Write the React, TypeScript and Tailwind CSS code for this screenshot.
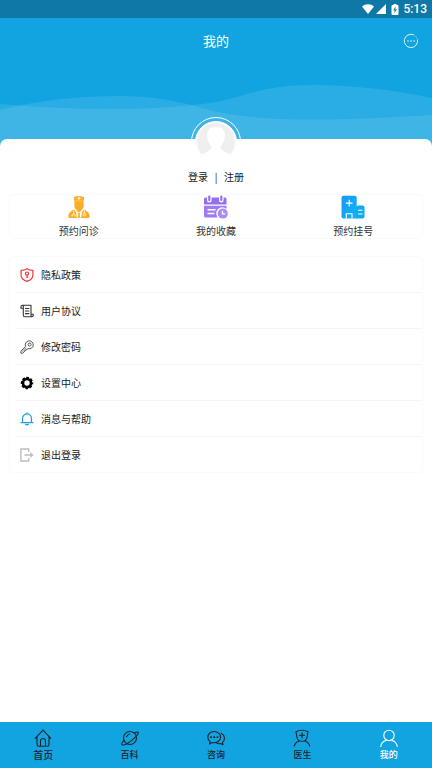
import type { ReactNode } from "react";

function StatusBar() {
  return (
    <div className="flex h-[18px] items-center justify-end bg-[#0f78a7] pr-[5px] text-white">
      <svg viewBox="0 0 12 10" className="h-[10px] w-[12px]" fill="currentColor" aria-hidden="true">
        <path d="M6 10 0 2.400C3.200-.5 8.800-.5 12 2.400Z" />
      </svg>
      <svg viewBox="0 0 10 10" className="ml-[2px] h-[10px] w-[10px]" fill="currentColor" aria-hidden="true">
        <path d="M10 0V10H0Z" />
      </svg>
      <svg viewBox="0 0 8 11" className="ml-[5px] h-[11px] w-[8px]" aria-hidden="true">
        <path d="M2.500 0h3v1H6.500Q7.500 1 7.500 2V10Q7.500 11 6.500 11h-5Q.5 11 .5 10V2Q.5 1 1.500 1h1Z" fill="#fff" />
        <path d="M4.700 2.500 2.200 6.300H3.700L3.300 9.200 5.900 5.400H4.300Z" fill="#0f78a7" />
      </svg>
      <span className="ml-[4px] font-[Roboto,sans-serif] text-[12px] leading-[18px] font-medium">5:13</span>
    </div>
  );
}

function Waves() {
  return (
    <svg
      viewBox="0 0 432 132"
      preserveAspectRatio="none"
      className="absolute inset-0 h-full w-full"
      fill="#fff"
      fillOpacity="0.1"
      aria-hidden="true"
    >
      <path d="M0 92C40 82 80 78 120 78C150 78 172 82 195 88C225 97 255 101.500 315 101.500C360 101.500 400 99 432 97V132H0Z" />
      <path d="M0 86C35 89 75 91 115 91C155 91 190 88 216 84C245 79 260 67 315 67C350 67 395 72 432 80V132H0Z" />
    </svg>
  );
}

function Header() {
  return (
    <header className="relative h-[132px] bg-[#12a4e1]">
      <Waves />
      <div className="relative grid h-[46px] grid-cols-[1fr_auto_1fr] items-center px-[13px]">
        <h1 className="col-start-2 text-[13px] leading-[18px] text-white">我的</h1>
        <button type="button" aria-label="消息" className="justify-self-end">
          <svg viewBox="0 0 16 16" className="h-4 w-4" fill="none" stroke="#fff" strokeOpacity="0.85" strokeWidth="1" strokeLinecap="round">
            <path d="M10.500 1.700A6.700 6.700 0 1 0 14.600 7" />
            <path d="M11.500 2.300A6.700 6.700 0 0 1 14.400 6" strokeOpacity="0.3" />
            <path d="M4.900 8h.1M8 8h.1M11.100 8h.1" strokeWidth="1.500" />
          </svg>
        </button>
      </div>
    </header>
  );
}

function Avatar() {
  return (
    <div className="mx-auto -mt-[22px] flex h-[50px] w-[50px] items-center justify-center rounded-full border border-white">
      <svg viewBox="0 0 42 42" className="h-[42px] w-[42px]" aria-hidden="true">
        <circle cx="21" cy="21" r="20.500" fill="#fff" stroke="#fbfbfb" />
        <circle cx="21" cy="21" r="19" fill="#efefef" />
        <path
          d="M21 5.500C14.500 5.500 11.300 10.500 12.100 16C12.500 20 14.800 23.500 16.300 25C17 29 14 29.800 4.500 34.500A20 20 0 0 0 37.500 34.500C28 29.800 25 29 25.700 25C27.200 23.500 29.500 20 29.900 16C30.700 10.500 27.500 5.500 21 5.500Z"
          fill="#fff"
        />
      </svg>
    </div>
  );
}

const shortcuts: { label: string; icon: ReactNode }[] = [
  {
    label: "预约问诊",
    icon: (
      <svg viewBox="0 0 24 24" className="h-6 w-6" aria-hidden="true">
        <path d="M6.800 2.200Q12-.4 17.200 2.200L16.600 7.500V11.500C16.200 13.500 14.500 15 14.500 15V17H9.500V15S7.800 13.500 7.400 11.500V7.500Z" fill="#fbad26" />
        <path d="M7.300 6.300Q12 5.100 16.700 6.300" stroke="#ffd389" strokeWidth=".7" fill="none" />
        <path d="M12 1.800v3M10.500 3.300h3" stroke="#fff" strokeWidth=".9" />
        <path d="M7.400 14.500 12 22 16.600 14.500C20.500 15.800 22.600 18 22.700 22Q22.700 23 21.500 23H2.500Q1.300 23 1.300 22C1.400 18 3.500 15.800 7.400 14.500Z" fill="#fbad26" />
        <path d="M8.800 15 9.800 22.500H14.200L15.200 15 12 17.800Z" fill="#fff" />
        <path d="m12 17.300-1.300 1.200.7 1-.6 2.300L12 23l1.200-1.200-.6-2.300.7-1Z" fill="#fbad26" />
        <path d="M6.700 15.500v3.500M5.200 21.500V20Q6.700 17.500 8.200 20v1.500M17.300 15.500v3" stroke="#fff" strokeWidth=".9" fill="none" />
        <circle cx="17.300" cy="19.700" r="1.200" fill="none" stroke="#fff" strokeWidth=".9" />
      </svg>
    ),
  },
  {
    label: "我的收藏",
    icon: (
      <svg viewBox="0 0 24 24" className="h-6 w-6" aria-hidden="true">
        <path d="M0 4Q0 2.500 1.500 2.500H3V5Q3 7.500 5.300 7.500T7.600 5V2.500H15V5Q15 7.500 17.300 7.500T19.600 5V2.500H21Q22.500 2.500 22.500 4V9.500H0Z" fill="#9570ec" />
        <rect x="4.200" y=".5" width="2.200" height="5.700" rx="1.100" fill="#9570ec" />
        <rect x="16.200" y=".5" width="2.200" height="5.700" rx="1.100" fill="#9570ec" />
        <path d="M0 10.800H22.500V14A6 6 0 0 0 14 22.500H1.500Q0 22.500 0 21Z" fill="#a17cf1" />
        <path d="M3.500 14.700H11.500M3.500 18.500H10.500" stroke="#fff" strokeWidth="1.400" />
        <circle cx="18.800" cy="18.600" r="5" fill="#a98bf5" />
        <path d="M18.500 15.800V18.900H21.200" stroke="#fff" strokeWidth="1.300" fill="none" />
      </svg>
    ),
  },
  {
    label: "预约挂号",
    icon: (
      <svg viewBox="0 0 24 24" className="h-6 w-6" aria-hidden="true">
        <defs>
          <linearGradient id="hospital" x1="0" y1="0" x2="1" y2="1">
            <stop offset="0" stopColor="#1799f4" />
            <stop offset="1" stopColor="#0bb5fb" />
          </linearGradient>
        </defs>
        <path d="M2.500.8H13.700Q15.700.8 15.700 2.800V23.500H2.500Q.5 23.500.5 21.500V2.800Q.5.8 2.500.8Z" fill="url(#hospital)" />
        <path d="M17 10.500H21.500Q23.500 10.500 23.500 12.500V21.500Q23.500 23.500 21.500 23.500H15V12.500Q15 10.500 17 10.500Z" fill="#0eabf3" />
        <path d="M8.200 4.700V11.500M4.800 8.100H11.600M17 15.300H21.500M17 19H21.500" stroke="#fff" strokeWidth="1.100" />
        <path d="M5.300 23.500V18.800H11V23.500" stroke="#fff" strokeWidth="1.100" fill="none" />
      </svg>
    ),
  },
];

const menu: { label: string; icon: ReactNode }[] = [
  {
    label: "隐私政策",
    icon: (
      <g fill="none" stroke="#f0353c" strokeWidth="1.200" strokeLinejoin="round">
        <path d="M7 .7C5.200 2 3.500 2.400 1.100 2.400V7.200C1.100 10.500 3.500 12.200 7 13.400C10.500 12.200 12.900 10.500 12.900 7.200V2.400C10.500 2.400 8.800 2 7 .7Z" />
        <circle cx="7" cy="5.600" r="1.600" />
        <path d="M7 7.200V10M7 9.200H8.200" />
      </g>
    ),
  },
  {
    label: "用户协议",
    icon: (
      <g fill="none" stroke="#333" strokeWidth="1.100" strokeLinejoin="round">
        <path d="M3.300 4V11.200Q3.300 12.800 5 12.800H11.700Q13.200 12.800 13.200 11.200V10.200H11V1.300H2.400Q1 1.300 1 2.700V4.200H3.300M3.300 4V2.500Q3.300 1.300 2.400 1.300M11 10.200V11.500Q11 12.800 11.800 12.800" />
        <path d="M5 4.500H9.300M5 7H9.300M5 9.600H9.300" />
      </g>
    ),
  },
  {
    label: "修改密码",
    icon: (
      <g fill="none" stroke="#555" strokeWidth="1" strokeLinejoin="round">
        <path d="M5.600 6.500A4 4 0 1 1 8.200 8.700L7 9.300 6.200 9.200 5.800 10.600 4.500 10.700 4.200 12 2.800 13.200H.9V11.200Z" />
        <circle cx="9.600" cy="4.600" r="1.500" />
        <path d="M2 11.600 6.200 7.600" strokeWidth=".7" />
      </g>
    ),
  },
  {
    label: "设置中心",
    icon: (
      <g fill="none" stroke="#000">
        <circle cx="7" cy="7" r="4" strokeWidth="2.600" />
        <circle cx="7" cy="7" r="5.300" strokeWidth="1.800" strokeDasharray="2.700 1.463" strokeDashoffset="1.350" />
      </g>
    ),
  },
  {
    label: "消息与帮助",
    icon: (
      <g fill="none" stroke="#1c9fdc" strokeWidth="1.200" strokeLinecap="round" strokeLinejoin="round">
        <path d="M1 10.700H13M2.600 10.500V6.200A4.400 4.400 0 0 1 11.400 6.200V10.500M7 1.600V.9M5.500 12.300Q7 13.600 8.500 12.300" />
      </g>
    ),
  },
  {
    label: "退出登录",
    icon: (
      <g fill="none" stroke="#bdbdbd" strokeWidth="1.400">
        <path d="M8.700 4V1H.9V13H8.700V10M4.500 7H11.500" />
        <path d="M10.300 4V10L13.600 7Z" fill="#bdbdbd" stroke="none" />
      </g>
    ),
  },
];

const tabs: { label: string; icon: ReactNode }[] = [
  {
    label: "首页",
    icon: <path d="M1.200 9.300 9 1.200 16.800 9.300M3 7.800V15.500Q3 17.200 4.700 17.200H13.300Q15 17.200 15 15.500V7.800M6.500 17V12A2.500 2.500 0 0 1 11.500 12V17" />,
  },
  {
    label: "百科",
    icon: (
      <>
        <circle cx="9" cy="9" r="6.500" />
        <path d="M3 11C1 13.300.3 14.900 1 15.600C2.300 16.800 7 14.400 11.300 10.800C15.500 7.300 18 4.200 17.100 3.200C16.500 2.600 15.200 3 13.500 4M5.500 7.800Q6.500 5.500 8.700 5" />
      </>
    ),
  },
  {
    label: "咨询",
    icon: (
      <>
        <path d="M7.200 2.500C3.500 2.500.8 5 .8 8.200C.8 10 1.600 11.500 3 12.500L2.500 15 5.200 13.600C10 14.500 13.600 11.700 13.600 8.200C13.600 5 10.800 2.500 7.200 2.500Z" />
        <path d="M14.200 4.200C18.200 6.300 18.300 11.200 15.500 13.400L16 15.800 13.500 14.500Q11.500 15 9.800 14.300" />
        <path d="M4 8.200h.2M7.200 8.200h.2M10.400 8.200h.2" strokeWidth="1.800" />
      </>
    ),
  },
  {
    label: "医生",
    icon: (
      <>
        <path d="M3 2.700Q9-.2 15 2.700L14 8.500C13.500 11 11.500 12.300 9 12.300S4.500 11 4 8.500Z" />
        <path d="M9 3.700V8.700M6.500 6.200H11.500M1.300 17.200C1.800 14.800 3.500 13 6 12M16.700 17.200C16.200 14.800 14.500 13 12 12" />
      </>
    ),
  },
  {
    label: "我的",
    icon: (
      <>
        <circle cx="9" cy="6.400" r="5.200" />
        <path d="M.8 17.500C1 14.300 3.300 12.200 6.300 11.200M17.200 17.500C17 14.300 14.700 12.200 11.700 11.200" />
      </>
    ),
  },
];

function TabBar() {
  return (
    <nav className="grid h-[46px] grid-cols-5 bg-[#12a4e1]">
      {tabs.map((tab, i) => (
        <button
          key={tab.label}
          type="button"
          className={`flex flex-col items-center pt-[7px] ${i === 4 ? "text-white" : "text-[#1d2429]"}`}
        >
          <svg viewBox="0 0 18 18" className="h-[18px] w-[18px]" fill="none" stroke="currentColor" strokeWidth="1.100" strokeLinecap="round" strokeLinejoin="round" aria-hidden="true">
            {tab.icon}
          </svg>
          <span className={`leading-[16px] font-medium ${i === 0 ? "text-[10px]" : "text-[9px]"}`}>{tab.label}</span>
        </button>
      ))}
    </nav>
  );
}

export default function App() {
  return (
    <div className="flex min-h-screen flex-col bg-white font-['Noto_Sans_CJK_SC',sans-serif] text-[10px] leading-[14px] text-[#333]">
      <StatusBar />
      <Header />
      <main className="relative -mt-[11px] flex-1 rounded-t-[7px] bg-white px-[9px]">
        <Avatar />
        <div className="mt-[3px] flex justify-center text-[#222]">
          <a href="#login">登录</a>
          <span className="w-4 text-center">|</span>
          <a href="#register">注册</a>
        </div>
        <section className="mt-[10px] grid grid-cols-3 rounded-[4px] border border-[#fafafa]">
          {shortcuts.map((item) => (
            <button key={item.label} type="button" className="flex flex-col items-center">
              {item.icon}
              <span className="mt-[5px]">{item.label}</span>
            </button>
          ))}
        </section>
        <ul className="mt-[17px] rounded-[4px] border border-[#fafafa] pl-[7px]">
          {menu.map((item) => (
            <li key={item.label} className="border-b border-[#f5f5f5] last:border-b-0">
              <a href="#menu" className="flex h-[35px] items-center gap-[7px] pl-[3px] text-[#222]">
                <svg viewBox="0 0 14 14" className="h-[14px] w-[14px]" aria-hidden="true">
                  {item.icon}
                </svg>
                {item.label}
              </a>
            </li>
          ))}
        </ul>
      </main>
      <TabBar />
    </div>
  );
}
